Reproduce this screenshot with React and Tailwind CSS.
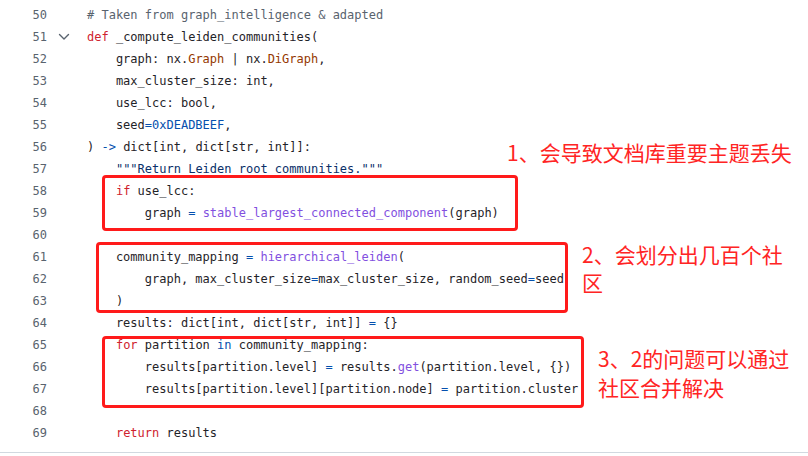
import React from "react";

const K = ({ c }) => <span className="text-[#cf222e]">{c}</span>;
const F = ({ c }) => <span className="text-[#8250df]">{c}</span>;
const T = ({ c }) => <span className="text-[#953800]">{c}</span>;
const B = ({ c }) => <span className="text-[#0550ae]">{c}</span>;
const S = ({ c }) => <span className="text-[#0a3069]">{c}</span>;
const C = ({ c }) => <span className="text-[#59636e]">{c}</span>;

const lines = [
  [50, <C c="# Taken from graph_intelligence & adapted" />],
  [51, <><K c="def" /> _compute_leiden_communities(</>, true],
  [52, <>{"    graph: nx."}<T c="Graph" /> | nx.<T c="DiGraph" />,</>],
  [53, <>{"    max_cluster_size: int,"}</>],
  [54, <>{"    use_lcc: bool,"}</>],
  [55, <>{"    seed"}<B c="=0xDEADBEEF" />,</>],
  [56, <>) <B c="->" /> dict[int, dict[str, int]]:</>],
  [57, <>{"    "}<S c={'"""Return Leiden root communities."""'} /></>],
  [58, <>{"    "}<K c="if" /> use_lcc:</>],
  [59, <>{"        graph "}<B c="=" /> <F c="stable_largest_connected_component" />(graph)</>],
  [60, <>{""}</>],
  [61, <>{"    community_mapping "}<B c="=" /> <F c="hierarchical_leiden" />(</>],
  [62, <>{"        graph, max_cluster_size"}<B c="=" />max_cluster_size, random_seed<B c="=" />seed</>],
  [63, <>{"    )"}</>],
  [64, <>{"    results: dict[int, dict[str, int]] "}<B c="=" /> {"{}"}</>],
  [65, <>{"    "}<K c="for" /> partition <B c="in" /> community_mapping:</>],
  [66, <>{"        results[partition.level] "}<B c="=" /> results.<F c="get" />(partition.level, {"{}"})</>],
  [67, <>{"        results[partition.level][partition.node] "}<B c="=" /> partition.cluster</>],
  [68, <>{""}</>],
  [69, <>{"    "}<K c="return" /> results</>],
];

function Chevron() {
  return (
    <svg width="12" height="8" viewBox="0 0 12 8" className="text-[#59636e]">
      <polyline points="1.5,1.5 6,6 10.5,1.5" fill="none" stroke="currentColor" strokeWidth="1.4" strokeLinecap="round" strokeLinejoin="round" />
    </svg>
  );
}

export default function App() {
  return (
    <div className="relative w-[808px] h-[456px] bg-white overflow-hidden">
      <div className="h-[453px] border-b border-[#d1d9e0] pt-[4px]">
        <div className="flex flex-col font-['DejaVu_Sans_Mono',monospace] text-[12px] text-[#1f2328]">
          {lines.map(([n, code, fold]) => (
            <div key={n} className="flex h-[22px] items-center">
              <div className="w-[47px] text-right text-[#59636e]">{n}</div>
              <div className="w-[40px] flex items-center pl-[11px]">{fold ? <Chevron /> : null}</div>
              <div className="whitespace-pre">{code}</div>
            </div>
          ))}
        </div>
      </div>

      {/* red annotation boxes */}
      <div className="absolute left-[102px] top-[175px] w-[416px] h-[56px] border-[3px] border-[#ff1a1a] rounded-[4px]" />
      <div className="absolute left-[96px] top-[242px] w-[472px] h-[71px] border-[3px] border-[#ff1a1a] rounded-[4px]" />
      <div className="absolute left-[102px] top-[336px] w-[482px] h-[72px] border-[3px] border-[#ff1a1a] rounded-[4px]" />

      {/* annotation texts */}
      <div className="absolute left-[507px] top-[138px] text-[21px] leading-[28px] text-[#ff2424] font-['Noto_Sans_CJK_SC',sans-serif] whitespace-nowrap">
        1、会导致文档库重要主题丢失
      </div>
      <div className="absolute left-[582px] top-[240px] text-[21px] leading-[28px] text-[#ff2424] font-['Noto_Sans_CJK_SC',sans-serif] whitespace-nowrap">
        2、会划分出几百个社<br />区
      </div>
      <div className="absolute left-[598px] top-[344px] text-[21px] leading-[29px] text-[#ff2424] font-['Noto_Sans_CJK_SC',sans-serif] whitespace-nowrap">
        3、2的问题可以通过<br />社区合并解决
      </div>
    </div>
  );
}
